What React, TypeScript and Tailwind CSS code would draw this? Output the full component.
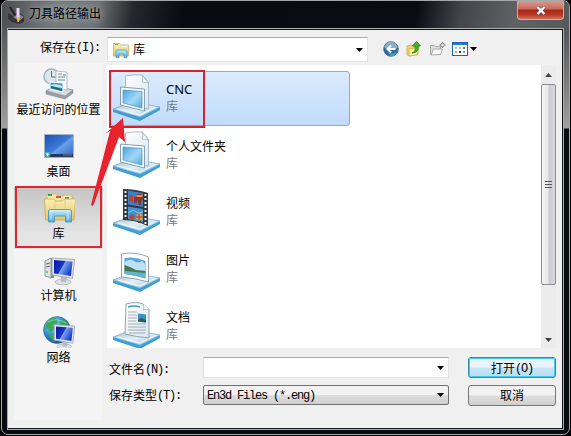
import React from "react";

const CJK = "font-['Noto_Sans','Noto_Sans_CJK_SC',sans-serif]";

function Defs() {
  return (
    <svg width="0" height="0" className="absolute">
      <defs>
        <linearGradient id="base" x1="0" y1="0" x2="1" y2="1">
          <stop offset="0" stopColor="#9fb9c6" /><stop offset=".5" stopColor="#e2eef5" /><stop offset="1" stopColor="#8dc5e2" />
        </linearGradient>
        <linearGradient id="screen" x1="0" y1="0" x2="1" y2="1">
          <stop offset="0" stopColor="#46a5dc" /><stop offset=".55" stopColor="#a3d8f5" /><stop offset="1" stopColor="#4fa9dc" />
        </linearGradient>
        <linearGradient id="paper" x1="0" y1="0" x2="1" y2="1">
          <stop offset="0" stopColor="#ffffff" /><stop offset="1" stopColor="#d9e6ef" />
        </linearGradient>
        <linearGradient id="monitor" x1="0" y1="0" x2="1" y2=".5">
          <stop offset="0" stopColor="#0714a0" /><stop offset=".5" stopColor="#1636cb" /><stop offset=".55" stopColor="#7ba4f2" /><stop offset="1" stopColor="#1c3fd0" />
        </linearGradient>
        <linearGradient id="desk" x1="0" y1="0" x2="1" y2="1">
          <stop offset="0" stopColor="#1c50b0" /><stop offset=".5" stopColor="#3d7bd8" /><stop offset=".55" stopColor="#6ba0ea" /><stop offset="1" stopColor="#2a5fc2" />
        </linearGradient>
        <linearGradient id="folder" x1="0" y1="0" x2="0" y2="1">
          <stop offset="0" stopColor="#fbf0b4" /><stop offset="1" stopColor="#e5c566" />
        </linearGradient>
        <linearGradient id="clip" x1="0" y1="0" x2="0" y2="1">
          <stop offset="0" stopColor="#c3ecfb" /><stop offset="1" stopColor="#4ea7d6" />
        </linearGradient>
        <radialGradient id="globe" cx=".35" cy=".3" r=".75">
          <stop offset="0" stopColor="#8bdcf5" /><stop offset=".6" stopColor="#2a86cc" /><stop offset="1" stopColor="#124f94" />
        </radialGradient>
      </defs>
    </svg>
  );
}

function LibraryBase() {
  return (
    <>
      <path d="M1 35 L28 43 L48 33 V36 L28 47 L1 38Z" fill="#3e9fd2" />
      <path d="M1 35 L20 28 L48 33 L28 43Z" fill="url(#base)" stroke="#63aed5" strokeWidth=".7" />
      <path d="M6 35 L28 41 L43 33.5" fill="none" stroke="#f4fbff" strokeWidth="1" />
    </>
  );
}

function LibraryIcon({ kind }: { kind: string }) {
  return (
    <svg width="50" height="48" viewBox="0 0 50 48" className="mb-px shrink-0">
      <LibraryBase />
      {kind === "generic" && (
        <>
          <path d="M13.500 2 Q23 0 30 1 L36.500 8 V35 L13.500 32Z" fill="url(#paper)" stroke="#9aacb9" strokeWidth=".8" />
          <path d="M30 1 Q32 6 30 8 L36.500 9Z" fill="#fff" stroke="#9aacb9" strokeWidth=".7" />
          <path d="M8.500 13 L32.500 15 V37 L8.500 31Z" fill="#f6fafc" stroke="#7d96a6" strokeWidth=".9" />
          <path d="M11 16 L30 17.500 V34 L11 29Z" fill="url(#screen)" stroke="#4a94c1" strokeWidth=".7" />
        </>
      )}
      {kind === "video" && (
        <>
          <path d="M11 1 Q24 1 36 5 V38 Q24 32 11 32Z" fill="#34373c" />
          <path d="M16 2.500 L31 5 V19 L16 16.500Z" fill="#3f7fc4" />
          <path d="M16 18.500 L31 21 V34.500 L16 31Z" fill="#3f92d4" />
          <path d="M17 7h4v7l-4-1z" fill="#c93b2d" /><path d="M22 9h3v6h-3z" fill="#7e3565" />
          <circle cx="27.500" cy="9.500" r="3.800" fill="#8f3527" /><path d="M24.500 8h6" stroke="#f4bc46" strokeWidth="1.500" /><path d="M26 13l1 4h2v-4" fill="#713425" />
          <circle cx="20" cy="29" r="2.500" fill="#c43f34" /><circle cx="27.500" cy="29" r="3.500" fill="#e5a13e" /><path d="M24 29h7M27 26v6" stroke="#943c2b" /><path d="M26 33h3v2h-3z" fill="#713425" />
          <path d="M16 25l5-3 5 3 5-1" stroke="#8cc3e9" fill="none" />
          <path d="M13.500 3v28" stroke="#edf1ed" strokeWidth="2" strokeDasharray="2 2" />
          <path d="M33.500 6v30" stroke="#edf1ed" strokeWidth="2" strokeDasharray="2 2" />
        </>
      )}
      {kind === "picture" && (
        <>
          <path d="M9.500 9 Q23 6 36.500 12 V37 Q23 33 9.500 32Z" fill="#fff" stroke="#8997a3" strokeWidth=".9" />
          <path d="M12.500 13 Q23 11 33.500 16 V33.500 Q23 30 12.500 29Z" fill="#5ba4e5" />
          <path d="M13 17q5-4 9-1t8 0l3 3v7H13z" fill="#bee1f5" />
          <path d="M12.500 20 L18 22 L24 25 L33.500 26 V29 L12.500 27Z" fill="#437a53" />
          <path d="M12.500 26 L33.500 28 V33.500 Q23 30 12.500 29Z" fill="#64b4c9" />
        </>
      )}
      {kind === "document" && (
        <g transform="translate(0 -3)">
          <path d="M14 5 Q24 2 31 5 L37 10 V39 Q24 38 13 35Z" fill="url(#paper)" stroke="#8799a5" strokeWidth=".9" />
          <path d="M31 5 Q33 9 31 11 L37 10" fill="#fff" stroke="#9aacb9" strokeWidth=".8" />
          <path d="M16 8q6-2 12 0" stroke="#46a1ae" strokeWidth="1.500" fill="none" />
          <path d="M16 13h9M16 16h9M16 19h9M16 22h8M16 25h18M16 28h18M16 31h18M17 34h16" stroke="#9ba4ab" strokeWidth=".9" />
          <path d="M26 14.500l8 1v8l-8-1z" fill="#3690cc" /><path d="M26 21l3-2 5 2v2.500l-8-1z" fill="#2c5a59" />
        </g>
      )}
    </svg>
  );
}

function Monitor() {
  return (
    <>
      <ellipse cx="20" cy="28" rx="8" ry="2.800" fill="#dfe2e4" stroke="#9ea6ac" strokeWidth=".7" />
      <path d="M18 21h6l-1 7h-5z" fill="#b5bbc0" />
      <path d="M9 4 L31.500 5.500 L29.500 24.500 L9 21Z" fill="#e6e9ea" stroke="#9aa2a8" strokeWidth=".9" />
      <path d="M11 6 L29.500 7.500 L28 22 L11 19.500Z" fill="url(#monitor)" />
    </>
  );
}

function PlaceIcon({ kind }: { kind: string }) {
  return (
    <svg width="32" height="32" viewBox="0 0 32 32">
      {kind === "recent" && (
        <>
          <path d="M3 23l8-5 19 4-8 8z" fill="#d8dcdf" stroke="#7c858b" strokeWidth=".8" />
          <path d="M3 23v3l19 5 8-6v-3l-8 6z" fill="#9ba1a5" stroke="#727b82" strokeWidth=".5" />
          <circle cx="8.500" cy="8.500" r="7.500" fill="#dce6eb" stroke="#a5b3bb" strokeWidth="1.500" />
          <path d="M8.500 3v6h4" stroke="#596c78" fill="none" />
          <path d="M13 3l11 1v18l-11-2z" fill="#f8fafb" stroke="#a5b1b8" strokeWidth=".8" />
          <path d="M15 6h4M20 7h3M15 9h7M15 12h7" stroke="#638aa2" />
          <path d="M7 14l13 1v9L7 21z" fill="#459bd1" stroke="#fff" />
          <path d="M8 17q5-2 11 1v2L8 18z" fill="#c8e8f7" /><path d="M8 18l11 3v2L8 20z" fill="#236b66" />
        </>
      )}
      {kind === "desktop" && (
        <>
          <rect x="1.500" y="4.500" width="29" height="23" fill="url(#desk)" stroke="#a2b4c8" />
          <path d="M2 24h28v3H2z" fill="#263c5c" /><path d="M20 25h9" stroke="#6d7e91" />
          <circle cx="4.500" cy="24.500" r="2.800" fill="#4baab5" /><path d="M3 24h3M4.500 23v3" stroke="#d9f4d2" />
        </>
      )}
      {kind === "library" && (
        <>
          <path d="M4 4V2h9l2 2h5V3h9v10H4z" fill="#f5e8a7" stroke="#d2b55c" strokeWidth=".8" />
          <path d="M5 2h4v2H5z" fill="#36a743" /><path d="M13 4h5v2h-5z" fill="#d15745" /><path d="M22 5h4v2h-4z" fill="#4797cf" />
          <path d="M1.500 7h9l3 2h6l2-2h11l-1.500 21H2.500z" fill="url(#folder)" stroke="#c9a94f" strokeWidth=".8" />
          <path d="M12 9v10M22 8v11" stroke="#e3cb7b" />
          <path d="M5.500 19q0-1.500 2-1.500h19q2 0 2 1.500v11h-6v-6h-11v6h-6z" fill="url(#clip)" stroke="#479ac4" strokeWidth=".9" />
          <path d="M7 19h20M8 18v10M25 20v8" stroke="#e5faff" opacity=".7" />
        </>
      )}
      {kind === "computer" && (
        <>
          <path d="M2 7l6-3v20l-6-2z" fill="#e0e3e4" stroke="#7e898e" strokeWidth=".8" />
          <path d="M8 4l3 2v18H8z" fill="#848e94" /><path d="M3 10l4-1M3 13l4-1" stroke="#5d6970" /><circle cx="4" cy="18" r="1" fill="#54c461" />
          <Monitor />
        </>
      )}
      {kind === "network" && (
        <>
          <circle cx="14" cy="14" r="13.500" fill="url(#globe)" stroke="#1e6397" strokeWidth=".5" />
          <path d="M3 8q5-8 10-6l2 5-5 2 2 4-5 3-3-4-3 2zM18 2l7 5-2 5-4-3-2 1zM5 18l6 1 3 4-3 3z" fill="#3ca957" />
          <path d="M5 6q8-5 18 1" stroke="#b5eddb" opacity=".55" fill="none" />
          <g transform="translate(3 5) scale(.91)"><Monitor /></g>
        </>
      )}
    </svg>
  );
}

function SmallFolder() {
  return (
    <svg width="16" height="16" viewBox="0 0 16 16">
      <path d="M.5 1.500h6l1 1.500h8v11H.5z" fill="url(#folder)" stroke="#cdb05a" strokeWidth=".8" />
      <path d="M2 2.500h3" stroke="#6bbb65" /><path d="M9 4.500h5" stroke="#fff" />
      <path d="M3 15.500V9q0-1 1-1h9q1 0 1 1v6.500h-3V12H6v3.500z" fill="url(#clip)" stroke="#4695bd" strokeWidth=".7" />
    </svg>
  );
}

function Caret() {
  return <svg width="7" height="4" viewBox="0 0 7 4" className="shrink-0"><path d="M0 0h7L3.500 4z" fill="#000" /></svg>;
}

function Toolbar() {
  return (
    <div className="-mt-px ml-[15px] flex items-center">
      <svg width="16" height="16" viewBox="0 0 16 16">
        <circle cx="8" cy="8" r="7.300" fill="#2d6ca0" stroke="#42617b" strokeWidth=".8" />
        <path d="M1.500 7a6.500 6.500 0 0 1 13 0q-6 3-13 0" fill="#86afcb" />
        <path d="M4 8q1 7 10 3q-2 5-7 4" fill="#37b5dc" opacity=".7" />
        <path d="M12.500 8H5M8 4.500L4.500 8 8 11.500" stroke="#fff" strokeWidth="2" fill="none" />
      </svg>
      <svg width="16" height="16" viewBox="0 0 16 16" className="ml-[7px]">
        <path d="M1 5l5-1 1 1 5-1v9l-9 2-2-1z" fill="#f0d660" stroke="#c9a637" strokeWidth=".7" />
        <path d="M3 8l10-2-2 8-8 1z" fill="#fff0a0" stroke="#c5a23c" strokeWidth=".7" />
        <path d="M6 12q4-1 3-7H6.500L10.500 .5 14.500 5h-2.500q1 7-6 7z" fill="#47b52e" stroke="#207d1c" strokeWidth=".8" />
      </svg>
      <svg width="17" height="16" viewBox="0 0 17 16" className="ml-[7px]">
        <path d="M1.500 4.500h4l1 1h5v8h-10z" fill="#dedede" stroke="#a6a6a6" /><path d="M4.500 8h9l-2 5.500-9.500 .5z" fill="#f7f7f7" stroke="#aaa" />
        <circle cx="13.500" cy="4" r="1.800" fill="#fff" stroke="#777" /><path d="M13.500 1v1M13.500 6v1M10.500 4h1M15.500 4h1" stroke="#777" />
      </svg>
      <svg width="16" height="14" viewBox="0 0 16 14" className="ml-[6px]">
        <rect x=".5" y=".5" width="15" height="13" fill="#fff" stroke="#1765b4" /><path d="M1 1h14v2H1z" fill="#2279d2" />
        <path d="M3 5h2v2H3M7 5h2v2H7" fill="#aac5d6" /><path d="M11 5h2v2h-2z" fill="#47996c" />
        <path d="M3 9h2v2H3z" fill="#ed9152" /><path d="M7 9h2v2H7z" fill="#2a3b70" /><path d="M11 9h2v2h-2z" fill="#7497c9" />
      </svg>
      <span className="ml-[2px] flex"><Caret /></span>
    </div>
  );
}

function FormLabel({ text, accel }: { text: string; accel: string }) {
  return (
    <span className="flex items-center whitespace-nowrap">
      {text}<span className="font-['Liberation_Mono',monospace] text-[12px] tracking-[-1.2px]">{accel}</span>
    </span>
  );
}

const places = [
  ["recent", "最近访问的位置"],
  ["desktop", "桌面"],
  ["library", "库"],
  ["computer", "计算机"],
  ["network", "网络"],
];
const libraries = [
  ["generic", "CNC"],
  ["generic", "个人文件夹"],
  ["video", "视频"],
  ["picture", "图片"],
  ["document", "文档"],
];

export default function App() {
  return (
    <div className={`relative h-[436px] w-[571px] overflow-hidden bg-black text-[12px] leading-[16px] text-black ${CJK}`}>
      <Defs />
      <div className="ml-px flex h-[435px] w-[569px] flex-col rounded-[7px] border border-[#a3a8ab] bg-[linear-gradient(180deg,#54585b_0,#55585b_28px,#777_75px,#a0a0a0_127px,#080d14_128px,#080c12_100%)]">
        <header className="flex h-[27px] shrink-0 items-start rounded-t-[6px] bg-[linear-gradient(100deg,#4b4e51_0,#777b7d_55px,#707477_95px,#25292d_130px,#080c11_180px,#090d13_410px,#43474b_455px,#5f6366_510px,#55595c_100%)] pl-[6px]">
          <svg width="17" height="17" viewBox="0 0 17 17" className="mt-[6px]">
            <path d="M0 6l5 3 6-3 5 3v6l-5 2-7-2-4-3z" fill="#35343b" /><path d="M5 10l6-3 5 3-5 4z" fill="#8a8486" />
            <path d="M2 0l5 8" stroke="#242020" strokeWidth="2" /><path d="M10 1v9" stroke="#e8d8f7" strokeWidth="3" /><path d="M8.500 10h3.500l-1 5h-1.500z" fill="#f3b93e" />
          </svg>
          <span className="ml-[4px] mt-[5px] [text-shadow:0_0_6px_#b5b9bb,0_0_10px_#a0a4a6]">刀具路径输出</span>
          <button className="ml-auto mr-[5px] flex h-[19px] w-[47px] items-center justify-center rounded-b-[4px] border border-t-0 border-[#d8a8a0] bg-[linear-gradient(#d99a90_0,#c86957_45%,#a52716_50%,#b93622_75%,#d1705a_100%)]">
            <svg width="10" height="9" viewBox="0 0 10 9"><path d="M1.500 1l7 7M8.500 1l-7 7" stroke="#57545a" strokeWidth="3.600" /><path d="M1.500 1l7 7M8.500 1l-7 7" stroke="#fff" strokeWidth="2.200" /></svg>
          </button>
        </header>

        <div className="mx-[5px] h-[402px] border border-[#aaadaf]">
          <main className="flex h-full flex-col border-y border-r border-[#151719] bg-[#f0f0f0]">
            <div className="mt-[7px] flex h-[25px] shrink-0 items-center">
              <div className="w-[99px] pb-[3px] pl-[32px]"><FormLabel text="保存在" accel="(I):" /></div>
              <div className="flex h-[25px] w-[261px] items-center border border-[#e2e3e6] border-t-[#abadb3] bg-white pl-[5px] pr-[4px]">
                <SmallFolder /><span className="ml-[4px] mt-px">库</span><span className="ml-auto"><Caret /></span>
              </div>
              <Toolbar />
            </div>

            <div className="flex min-h-0 flex-1">
              <aside className="ml-[6px] mt-px h-[357px] w-[89px] bg-[#f4f4f4]">
                {places.map(([kind, label], i) => (
                  <div key={kind} className={`flex h-[62px] flex-col items-center pt-[5px] ${i === 2 ? "bg-[linear-gradient(#c4c4c4,#e4e4e4_75%)]" : ""}`}>
                    <PlaceIcon kind={kind} />
                    <span className="mt-[2px] whitespace-nowrap">{label}</span>
                  </div>
                ))}
              </aside>

              <section className="ml-[4px] w-[450px]">
                <div className="mt-[3px] flex h-[283px]">
                  <div className="flex h-full w-[434px] flex-col gap-[2px] overflow-hidden bg-white pl-[3px] pt-[6px]">
                    {libraries.map(([kind, label], i) => (
                      <div key={label} className={`flex h-[55px] w-[240px] shrink-0 items-center rounded-[3px] border pl-px ${i === 0 ? "border-[#84acdd] bg-[linear-gradient(#dcebfd,#c1dbfc)]" : "border-transparent"}`}>
                        <LibraryIcon kind={kind} />
                        <div className="ml-[4px] flex flex-col pb-[2px]">
                          <span className={i === 0 ? "text-[13px] leading-[17px]" : "leading-[17px]"}>{label}</span>
                          <span className="leading-[17px] text-[#77797c]">库</span>
                        </div>
                      </div>
                    ))}
                  </div>
                  <div className="flex w-[15px] flex-col items-center bg-[#ececec]">
                    <div className="flex h-[19px] items-center"><svg width="7" height="4"><path d="M0 4L3.500 0 7 4z" fill="#444" /></svg></div>
                    <div className="flex h-[201px] w-[15px] items-center justify-center rounded-[2px] border border-[#8e8f92] bg-[linear-gradient(90deg,#f5f5f5,#e8e8eb_45%,#cbcbd0_55%,#d7d7dc)]">
                      <svg width="7" height="9"><path d="M0 1.500h7M0 4.500h7M0 7.500h7" stroke="#55575c" /></svg>
                    </div>
                    <div className="mt-auto flex h-[16px] items-center"><svg width="7" height="4"><path d="M0 0h7L3.500 4z" fill="#444" /></svg></div>
                  </div>
                </div>
                <div className="mt-[9px] flex h-[21px] items-center">
                  <div className="w-[96px] pl-[2px] pt-[4px]"><FormLabel text="文件名" accel="(N):" /></div>
                  <div className="flex h-[21px] w-[246px] items-center justify-end border border-[#e1e2e5] border-t-[#abadb3] bg-white pr-[4px]"><Caret /></div>
                  <button className="ml-[19px] flex h-[21px] w-[88px] items-center justify-center rounded-[3px] border border-[#2d8dad] bg-[linear-gradient(#eaf5fb_48%,#c6e5f5_52%,#b7dff4)] pt-[2px] shadow-[inset_0_0_0_1px_#3ecaf2]"><FormLabel text="打开" accel="(O)" /></button>
                </div>
                <div className="mt-[7px] flex h-[20px] items-center">
                  <div className="w-[96px] pl-[2px] pt-[2px]"><FormLabel text="保存类型" accel="(T):" /></div>
                  <div className="flex h-[20px] w-[246px] items-center rounded-[2px] border border-[#707070] bg-[linear-gradient(#f2f2f2_48%,#dddddd_52%,#cfcfcf)] pl-[3px] pr-[4px]">
                    <span className="whitespace-pre pt-px font-['Liberation_Mono',monospace] text-[12px] tracking-[-1.2px]">En3d Files (*.eng)</span><span className="ml-auto"><Caret /></span>
                  </div>
                  <button className="ml-[19px] flex h-[21px] w-[88px] items-center justify-center rounded-[3px] border border-[#777] bg-[linear-gradient(#f2f2f2_48%,#dddddd_52%,#cfcfcf)] pt-[2px]">取消</button>
                </div>
              </section>
            </div>
          </main>
        </div>
      </div>

      <div className="absolute left-[109px] top-[70px] h-[58px] w-[96px] border-2 border-[#d2232f]" />
      <div className="absolute left-[15px] top-[186px] h-[62px] w-[87px] border-2 border-[#df252e]" />
      <svg width="571" height="436" className="pointer-events-none absolute left-0 top-0"><path d="M91 205L110 131 105 134 123 118 125 142 119 137 93 206Z" fill="#e9222e" /></svg>
    </div>
  );
}
